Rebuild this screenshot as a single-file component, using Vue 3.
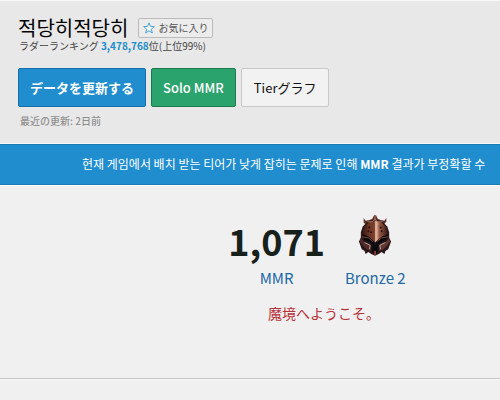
<script setup>
import { ref } from 'vue'

const summoner = '적당히적당히'
const rank = '3,478,768'
const favorite = ref(false)
</script>

<template>
  <div class="page">
    <header class="profile">
      <div class="title-row">
        <h1>{{ summoner }}</h1>
        <button class="favorite" type="button" :aria-pressed="favorite" @click="favorite = !favorite">
          <svg class="star" viewBox="0 0 12 12" aria-hidden="true">
            <path d="M6 .8 7.4 4.4 11.3 4.6 8.3 7.1 9.3 11 6 8.8 2.7 11 3.7 7.1 .7 4.6 4.6 4.4Z" />
          </svg>
          <span>お気に入り</span>
        </button>
      </div>
      <p class="ladder">ラダーランキング <a href="#ranking">{{ rank }}</a>位(上位99%)</p>
      <div class="actions">
        <button class="action update" type="button">データを更新する</button>
        <button class="action solo" type="button">Solo MMR</button>
        <button class="action tier" type="button">Tierグラフ</button>
      </div>
      <p class="updated">最近の更新: 2日前</p>
    </header>

    <div class="notice" role="status">현재 게임에서 배치 받는 티어가 낮게 잡히는 문제로 인해 <b>MMR</b> 결과가 부정확할 수</div>

    <main id="ranking" class="result">
      <div class="stats">
        <div class="stat">
          <strong class="score">1,071</strong>
          <span class="label">MMR</span>
        </div>
        <div class="stat">
          <svg class="emblem" viewBox="0 0 36 44" aria-hidden="true">
            <defs>
              <linearGradient id="bronze" x1="0" y1="0" x2="1" y2="0">
                <stop offset="0" stop-color="#2c1412" />
                <stop offset=".25" stop-color="#693322" />
                <stop offset=".48" stop-color="#7c412e" />
                <stop offset=".53" stop-color="#f0c6b0" />
                <stop offset=".66" stop-color="#9a5b44" />
                <stop offset="1" stop-color="#2c1412" />
              </linearGradient>
            </defs>
            <path d="M6 4 8 7 12 6 15 5 17 1 19 1 21 5 24 6 28 7 30 4 30 8 26 12 10 12 6 9Z" fill="#5a3026" />
            <path d="M18 5 26 8 31 13 33 19 33 25 35 29 32 37 29 39 28 42 25 40 22 42 18 44 14 42 11 40 8 42 7 39 4 37 1 29 3 25 3 19 5 13 10 8Z" fill="#29171a" />
            <path d="M18 7 25 9 30 14 32 22 26 23 20 28 18 30 15 28 10 23 4 22 6 14 11 9Z" fill="url(#bronze)" />
            <path d="M5 21 12 24 17 29 18 32 20 29 25 24 32 21 30 27 22 31 21 40 18 43 15 40 14 31 6 27Z" fill="#0b0c10" />
            <path d="M3 25 6 29 13 32 14 39 9 37 5 33 2 29Z" fill="#512c27" />
            <path d="M33 25 30 29 23 32 22 39 27 37 31 33 34 29Z" fill="#5e3831" />
            <path d="M7 30 13 33 12 37M29 30 23 33 24 37" fill="none" stroke="#bda49f" stroke-width="1" />
            <path d="M4 24 11 25 16 29M32 24 25 25 20 29" fill="none" stroke="#74453a" stroke-width="1" />
            <path d="M10 8 15 8 18 5 21 8 26 8M18 1V7" fill="none" stroke="#b58068" stroke-width="1" />
            <g fill="#220f0e">
              <circle cx="12" cy="14" r="1" /><circle cx="11" cy="18" r="1" /><circle cx="14" cy="19" r="1" />
              <circle cx="24" cy="14" r="1" /><circle cx="25" cy="18" r="1" />
            </g>
            <path d="M18 39V43" stroke="#993c32" stroke-width="2" />
          </svg>
          <span class="label">Bronze 2</span>
        </div>
      </div>
      <p class="message">魔境へようこそ。</p>
    </main>
    <footer class="rest"></footer>
  </div>
</template>

<style>
body {
  margin: 0;
  background: #f0f0f0;
}
</style>

<style scoped>
.page {
  font-family: "Noto Sans CJK JP", "Noto Sans CJK KR", sans-serif;
  color: #222;
  overflow: hidden;
}
h1,
p {
  margin: 0;
  font-weight: 400;
}
button {
  font-family: inherit;
  cursor: pointer;
}
.profile {
  padding: 15px 18px;
  background: #e8e8e8;
  border-top: 1px solid #f8f8f8;
  border-bottom: 1px solid #f8f8f8;
}
.title-row {
  display: flex;
  align-items: center;
  gap: 10px;
  height: 23px;
}
h1 {
  font-size: 20px;
  line-height: 22px;
  color: #000;
}
.favorite {
  display: flex;
  align-items: center;
  gap: 3px;
  height: 20px;
  padding: 0 4px;
  border: 1px solid #bbb;
  border-radius: 2px;
  background: #ececec;
  color: #555;
  font-size: 10px;
  line-height: 18px;
}
.star {
  width: 12px;
  height: 12px;
  fill: #f4f9fc;
  stroke: #4ba3d3;
}
.ladder {
  padding-left: 1px;
  font-size: 10px;
  line-height: 14px;
  color: #444;
}
.ladder a {
  color: #1e8ccd;
  font-weight: 700;
  text-decoration: none;
}
.actions {
  display: flex;
  gap: 5px;
  margin-top: 15px;
}
.action {
  height: 39px;
  padding: 0 11px;
  border: 1px solid;
  border-radius: 2px;
  font-size: 13px;
  line-height: 20px;
}
.update {
  background: #1f8dce;
  border-color: #1570aa;
  color: #fff;
  font-weight: 700;
}
.solo {
  background: #2ba36d;
  border-color: #1b7a4e;
  color: #fff;
  font-weight: 500;
}
.tier {
  padding: 0 12px;
  background: #f2f2f2;
  border-color: #c8c8c8;
  color: #111;
}
.updated {
  margin-top: 7px;
  padding-left: 2px;
  font-size: 10px;
  font-weight: 500;
  line-height: 14px;
  color: #909090;
}
.notice {
  padding: 9px 0 10px 82px;
  background: #1f8dce;
  border-top: 1px solid #187bb5;
  border-bottom: 1px solid #187bb5;
  color: #fff;
  font-size: 12px;
  line-height: 20px;
  white-space: nowrap;
}
.result {
  display: flex;
  flex-direction: column;
  align-items: center;
  padding: 28px 0 53px 148px;
  border-top: 1px solid #fff;
  border-bottom: 1px solid #c4c4c4;
}
.stats {
  display: flex;
  gap: 20px;
  padding-right: 14px;
}
.stat {
  display: flex;
  flex-direction: column;
  align-items: center;
}
.score {
  font-size: 36px;
  line-height: 52px;
  font-weight: 700;
  color: #16211c;
}
.emblem {
  width: 34px;
  height: 42px;
  margin-bottom: 10px;
}
.label {
  font-size: 15px;
  line-height: 24px;
  color: #2168a5;
}
.message {
  margin-top: 11px;
  font-size: 14px;
  line-height: 24px;
  color: #b93138;
}
.rest {
  height: 20px;
  border-top: 1px solid #f8f8f8;
}
</style>
